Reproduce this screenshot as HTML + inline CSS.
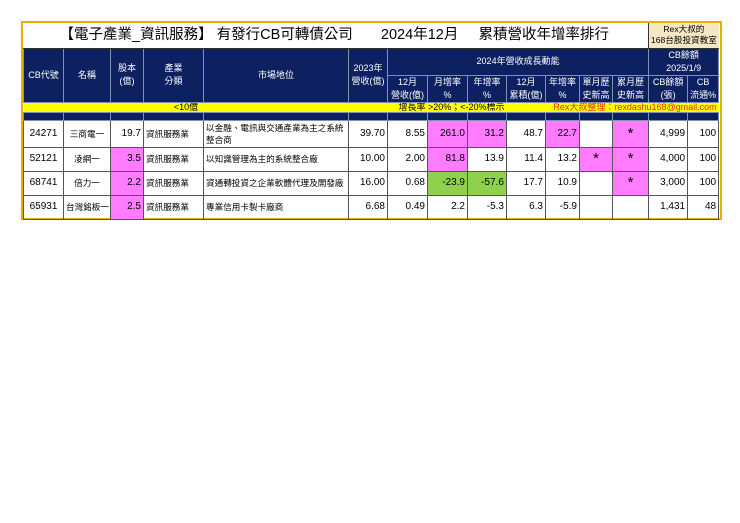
<!DOCTYPE html>
<html><head><meta charset="utf-8"><style>
body{margin:0;background:#fff;width:740px;height:523px;position:relative;font-family:"Liberation Sans","Noto Sans CJK TC",sans-serif;}
.frame{position:absolute;left:21px;top:21px;width:697px;height:195px;border:2px solid #e6b000;}
table{position:absolute;left:23px;top:23px;border-collapse:collapse;table-layout:fixed;width:695px;}
td{padding:0 2px;font-size:10px;border:1px solid #555;overflow:hidden;white-space:nowrap;line-height:12px;}
.h td{background:#0d2160;color:#fff;text-align:center;border-color:#8090b0;font-size:9px;line-height:13px;}
.t td{border:none;border-bottom:1px solid #333;}
.d td{text-align:right;color:#000;}
.c{text-align:center!important}
.l{text-align:left!important}
.s{font-size:8.6px!important}
.p{background:#ff7bff}
.g{background:#8fd14f}
.star{font-size:15px;text-align:center!important}
</style></head><body>
<div class="frame"></div>
<table>
<colgroup>
<col style="width:40px"><col style="width:47px"><col style="width:33px"><col style="width:60px"><col style="width:145px"><col style="width:39px"><col style="width:40px"><col style="width:40px"><col style="width:39px"><col style="width:39px"><col style="width:34px"><col style="width:33px"><col style="width:36px"><col style="width:39px"><col style="width:31px">
</colgroup>
<tr class="t" style="height:25px"><td colspan="13" style="font-size:14.5px;padding-left:36px;">【電子產業_資訊服務】 有發行CB可轉債公司 &nbsp;&nbsp;&nbsp;&nbsp;&nbsp;&nbsp;2024年12月 &nbsp;&nbsp;&nbsp;&nbsp;累積營收年增率排行</td><td colspan="2" style="background:#f6e7c3;text-align:center;font-size:8.6px;line-height:11px;border-left:1px solid #333;padding:0">Rex大叔的<br>168台股投資教室</td></tr>
<tr class="h" style="height:27px"><td rowspan="2">CB代號</td><td rowspan="2">名稱</td><td rowspan="2">股本<br>(億)</td><td rowspan="2">產業<br>分類</td><td rowspan="2">市場地位</td><td rowspan="2">2023年<br>營收(億)</td><td colspan="7">2024年營收成長動能</td><td colspan="2">CB餘額<br>2025/1/9</td></tr>
<tr class="h" style="height:26px"><td>12月<br>營收(億)</td><td>月增率<br>%</td><td>年增率<br>%</td><td>12月<br>累積(億)</td><td>年增率<br>%</td><td>單月歷<br>史新高</td><td>累月歷<br>史新高</td><td>CB餘額<br>(張)</td><td>CB<br>流通%</td></tr>
<tr style="height:9px;background:#ffff00"><td colspan="5" style="text-align:center;font-size:9px;line-height:9px;border:none">&lt;10億</td><td colspan="5" style="font-size:9px;line-height:9px;padding-left:50px;border:none">增長率 &gt;20%；&lt;-20%標示</td><td colspan="5" style="color:#e03000;font-size:9px;line-height:9px;border:none;text-align:right">Rex大叔整理：rexdashu168@gmail.com</td></tr>
<tr class="h" style="height:8px"><td></td><td></td><td></td><td></td><td></td><td></td><td></td><td></td><td></td><td></td><td></td><td></td><td></td><td></td><td></td></tr>
<tr class="d" style="height:27px"><td class="c">24271</td><td class="c s">三商電一</td><td>19.7</td><td class="l s">資訊服務業</td><td class="l s" style="white-space:normal">以金融、電訊與交通產業為主之系統整合商</td><td>39.70</td><td>8.55</td><td class="p">261.0</td><td class="p">31.2</td><td>48.7</td><td class="p">22.7</td><td></td><td class="p star">*</td><td>4,999</td><td>100</td></tr>
<tr class="d" style="height:24px"><td class="c">52121</td><td class="c s">凌網一</td><td class="p">3.5</td><td class="l s">資訊服務業</td><td class="l s">以知識管理為主的系統整合廠</td><td>10.00</td><td>2.00</td><td class="p">81.8</td><td>13.9</td><td>11.4</td><td>13.2</td><td class="p star">*</td><td class="p star">*</td><td>4,000</td><td>100</td></tr>
<tr class="d" style="height:24px"><td class="c">68741</td><td class="c s">倍力一</td><td class="p">2.2</td><td class="l s">資訊服務業</td><td class="l s">資通轉投資之企業軟體代理及開發廠</td><td>16.00</td><td>0.68</td><td class="g">-23.9</td><td class="g">-57.6</td><td>17.7</td><td>10.9</td><td></td><td class="p star">*</td><td>3,000</td><td>100</td></tr>
<tr class="d" style="height:24px"><td class="c">65931</td><td class="c s">台灣銘板一</td><td class="p">2.5</td><td class="l s">資訊服務業</td><td class="l s">專業信用卡製卡廠商</td><td>6.68</td><td>0.49</td><td>2.2</td><td>-5.3</td><td>6.3</td><td>-5.9</td><td></td><td></td><td>1,431</td><td>48</td></tr>
</table>
</body></html>
